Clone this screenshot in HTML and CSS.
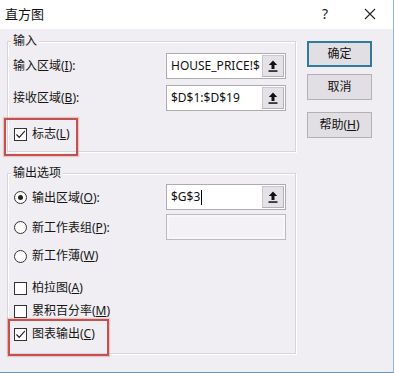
FILE: index.html
```html
<!DOCTYPE html>
<html lang="zh-CN">
<head>
<meta charset="utf-8">
<title>直方图</title>
<link rel="stylesheet" href="styles.css">
</head>
<body>
<div class="window">
  <div class="titlebar">
    <span class="title">直方图</span>
    <span class="help">?</span>
    <span class="close">
      <svg width="12" height="12" viewBox="0 0 12 12"><path d="M1 1 L11 11 M11 1 L1 11" stroke="#222" stroke-width="1.1" fill="none"/></svg>
    </span>
  </div>
  <div class="main">
    <div class="groups">
      <div class="group g-input">
        <div class="group-title">输入</div>
        <div class="field-row r1">
          <span class="label">输入区域(<u>I</u>):</span>
          <div class="ref-input"><span class="value">HOUSE_PRICE!$</span><span class="pick"><svg width="10" height="12" viewBox="0 0 10 12"><path d="M5 0.5 L0.8 5 H3.5 V9 H6.5 V5 H9.2 Z" fill="#111"/><rect x="0.5" y="10.3" width="9" height="1.5" fill="#111"/></svg></span></div>
        </div>
        <div class="field-row r2">
          <span class="label">接收区域(<u>B</u>):</span>
          <div class="ref-input"><span class="value">$D$1:$D$19</span><span class="pick"><svg width="10" height="12" viewBox="0 0 10 12"><path d="M5 0.5 L0.8 5 H3.5 V9 H6.5 V5 H9.2 Z" fill="#111"/><rect x="0.5" y="10.3" width="9" height="1.5" fill="#111"/></svg></span></div>
        </div>
        <div class="opt-row hl hl-label">
          <span class="box"><svg width="11" height="11" viewBox="0 0 11 11"><path d="M1.5 5.5 L4.2 8.3 L9.8 2.2" stroke="#222" stroke-width="1.2" fill="none"/></svg></span>
          <span>标志(<u>L</u>)</span>
        </div>
      </div>

      <div class="group g-output">
        <div class="group-title">输出选项</div>
        <div class="field-row o1">
          <span class="radio-label"><span class="radio on"></span><span>输出区域(<u>O</u>):</span></span>
          <div class="ref-input"><span class="value">$G$3<span class="caret"></span></span><span class="pick"><svg width="10" height="12" viewBox="0 0 10 12"><path d="M5 0.5 L0.8 5 H3.5 V9 H6.5 V5 H9.2 Z" fill="#111"/><rect x="0.5" y="10.3" width="9" height="1.5" fill="#111"/></svg></span></div>
        </div>
        <div class="field-row o2">
          <span class="radio-label"><span class="radio"></span><span>新工作表组(<u>P</u>):</span></span>
          <div class="ref-input disabled"></div>
        </div>
        <div class="opt-row o3">
          <span class="radio"></span><span>新工作薄(<u>W</u>)</span>
        </div>
        <div class="opt-row c1">
          <span class="box"></span><span>柏拉图(<u>A</u>)</span>
        </div>
        <div class="opt-row c2">
          <span class="box"></span><span>累积百分率(<u>M</u>)</span>
        </div>
        <div class="opt-row c3 hl hl-chart">
          <span class="box"><svg width="11" height="11" viewBox="0 0 11 11"><path d="M1.5 5.5 L4.2 8.3 L9.8 2.2" stroke="#222" stroke-width="1.2" fill="none"/></svg></span>
          <span>图表输出(<u>C</u>)</span>
        </div>
      </div>
    </div>

    <div class="buttons">
      <button class="btn default">确定</button>
      <button class="btn cancel">取消</button>
      <button class="btn helpbtn">帮助(<u>H</u>)</button>
    </div>
  </div>
</div>
</body>
</html>
```

FILE: styles.css
```css
* { box-sizing: border-box; }

html, body {
  margin: 0;
  padding: 0;
  background: #f0eef2;
}

body {
  font-family: "Noto Sans", "Noto Sans CJK SC", sans-serif;
  font-size: 12px;
  color: #151515;
}

.window {
  width: 394px;
  height: 373px;
  background: #f0eef2;
  border-right: 1px solid #8dbbe0;
  border-bottom: 1px solid #6c92b4;
  overflow: hidden;
}

.titlebar {
  height: 29px;
  background: #ffffff;
  display: flex;
  align-items: center;
}

.title {
  flex: 1;
  padding-left: 5px;
  font-size: 13px;
  color: #111;
  line-height: 16px;
  padding-bottom: 2px;
}

.help {
  width: 20px;
  text-align: center;
  font-size: 14px;
  color: #222;
  padding-bottom: 2px;
}

.close {
  width: 46px;
  margin-left: 12px;
  display: flex;
  justify-content: center;
  padding-bottom: 2px;
}

.main {
  display: flex;
  padding-top: 12px;
}

.groups {
  margin-left: 7px;
  width: 289px;
}

.group {
  border: 1px solid #d7d5da;
  box-shadow: 1px 1px 0 #ffffff, inset 1px 1px 0 #ffffff;
  padding: 0 9px 7px 5px;
}

.g-output {
  margin-top: 21px;
  padding-bottom: 9px;
}

.group-title {
  margin-top: -9px;
  margin-left: -2px;
  width: fit-content;
  padding: 0 2px;
  height: 16px;
  line-height: 16px;
  background: #f0eef2;
}

.field-row {
  height: 26px;
  display: flex;
  align-items: center;
  justify-content: space-between;
}

.r1 { margin-top: 4px; }
.r2 { margin-top: 6px; }
.o1 { margin-top: 3px; }
.o2 { margin-top: 4px; }

.label { line-height: 16px; }

.ref-input {
  width: 120px;
  height: 26px;
  border: 1px solid #aeacb2;
  background: #ffffff;
  display: flex;
}

.ref-input.disabled {
  background: #f3f1f5;
  border-color: #bcbabe;
  box-shadow: inset 0 0 0 2px #f7f6f8;
}

.value {
  flex: 1;
  padding-left: 4px;
  line-height: 24px;
  white-space: nowrap;
  overflow: hidden;
  color: #111;
  display: flex;
  align-items: center;
}

.caret {
  display: inline-block;
  width: 1px;
  height: 15px;
  background: #000;
  margin-left: 1px;
}

.pick {
  width: 22px;
  margin: 1px 1px 1px 0;
  background: #e4e2e6;
  border: 1px solid #c9c7cc;
  border-right-color: #b3b1b6;
  border-bottom-color: #b3b1b6;
  display: flex;
  align-items: center;
  justify-content: center;
}

.opt-row {
  height: 20px;
  display: flex;
  align-items: center;
  gap: 5px;
  line-height: 16px;
}

.o3 { margin-top: 6px; }
.c1 { margin-top: 12px; }
.c2 { margin-top: 3px; }
.c3 { margin-top: 3px; }
.hl-label { margin-top: 13px; }

.radio-label {
  display: flex;
  align-items: center;
  gap: 5px;
}

.box {
  width: 13px;
  height: 13px;
  margin-left: 1px;
  border: 1px solid #333333;
  background: #ffffff;
  display: flex;
  align-items: center;
  justify-content: center;
}

.radio {
  width: 13px;
  height: 13px;
  margin-left: 1px;
  border: 1px solid #333333;
  border-radius: 50%;
  background: #ffffff;
  display: flex;
  align-items: center;
  justify-content: center;
}

.radio.on::after {
  content: "";
  width: 5px;
  height: 5px;
  border-radius: 50%;
  background: #222;
}

.hl { position: relative; }

.hl::after {
  content: "";
  position: absolute;
  border: 2px solid #c4504f;
  box-shadow: 0 0 1px 1px rgba(210, 120, 120, 0.35);
}

.hl-label::after {
  top: -6px;
  left: -9px;
  width: 70px;
  height: 34px;
}

.hl-chart::after {
  top: -5px;
  left: -5px;
  width: 97px;
  height: 33px;
}

.buttons {
  margin-left: 11px;
  width: 65px;
  display: flex;
  flex-direction: column;
}

.btn {
  height: 26px;
  width: 65px;
  padding: 0;
  font-family: "Noto Sans", "Noto Sans CJK SC", sans-serif;
  font-size: 12px;
  color: #111;
  background: #e1dfe3;
  border: 1px solid #b3b1b6;
  line-height: 16px;
}

.btn.default {
  border: 2px solid #2f7b9c;
}

.cancel { margin-top: 7px; }
.helpbtn { margin-top: 12px; }
```
